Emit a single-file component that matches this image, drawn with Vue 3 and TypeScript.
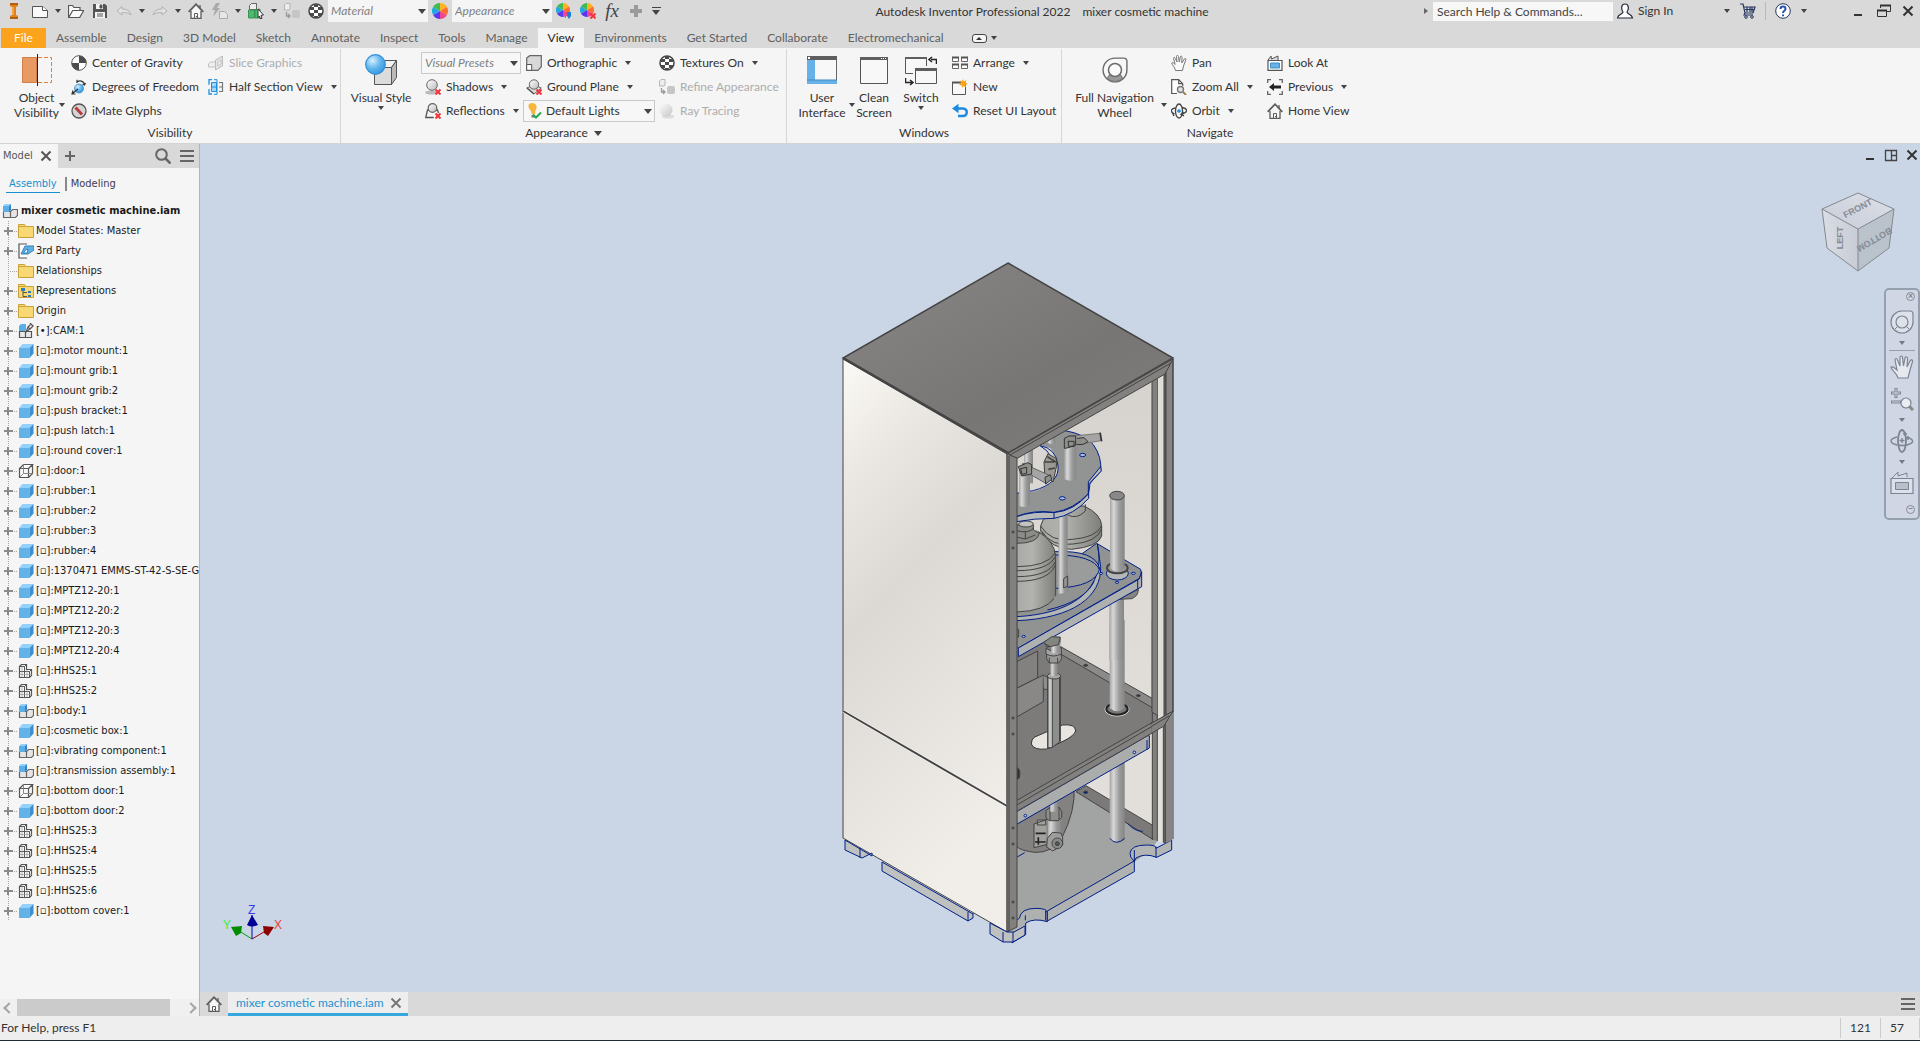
<script setup lang="ts">
import { ref } from 'vue'

interface Command {
  label: string
  icon: string
  arrow?: boolean
  disabled?: boolean
}

interface TreeNode {
  label: string
  icon: string
  leaf?: boolean
}

const tabs = [
  'Assemble', 'Design', '3D Model', 'Sketch', 'Annotate', 'Inspect', 'Tools', 'Manage', 'View',
  'Environments', 'Get Started', 'Collaborate', 'Electromechanical',
]
const activeTab = ref('View')

const visibilityA: Command[] = [
  { label: 'Center of Gravity', icon: 'gravity' },
  { label: 'Degrees of Freedom', icon: 'freedom' },
  { label: 'iMate Glyphs', icon: 'imate' },
]
const visibilityB: Command[] = [
  { label: 'Slice Graphics', icon: 'slice', disabled: true },
  { label: 'Half Section View', icon: 'section', arrow: true },
]
const shading: Command[] = [
  { label: 'Shadows', icon: 'shadow', arrow: true },
  { label: 'Reflections', icon: 'reflect', arrow: true },
]
const projection: Command[] = [
  { label: 'Orthographic', icon: 'ortho', arrow: true },
  { label: 'Ground Plane', icon: 'ground', arrow: true },
]
const textures: Command[] = [
  { label: 'Textures On', icon: 'texture', arrow: true },
  { label: 'Refine Appearance', icon: 'refine', disabled: true },
  { label: 'Ray Tracing', icon: 'ray', disabled: true },
]
const windowCommands: Command[] = [
  { label: 'Arrange', icon: 'arrange', arrow: true },
  { label: 'New', icon: 'newwin' },
  { label: 'Reset UI Layout', icon: 'reset' },
]
const navigateA: Command[] = [
  { label: 'Pan', icon: 'hand' },
  { label: 'Zoom All', icon: 'zoomall', arrow: true },
  { label: 'Orbit', icon: 'orbit', arrow: true },
]
const navigateB: Command[] = [
  { label: 'Look At', icon: 'lookat' },
  { label: 'Previous', icon: 'previous', arrow: true },
  { label: 'Home View', icon: 'home' },
]

const part = (name: string, icon = 'part'): TreeNode => ({ label: `[▫]:${name}`, icon })

const tree: TreeNode[] = [
  { label: 'Model States: Master', icon: 'folder' },
  { label: '3rd Party', icon: 'third' },
  { label: 'Relationships', icon: 'folder', leaf: true },
  { label: 'Representations', icon: 'folderrep' },
  { label: 'Origin', icon: 'folder' },
  { label: '[•]:CAM:1', icon: 'cam' },
  part('motor mount:1'),
  part('mount grib:1'),
  part('mount grib:2'),
  part('push bracket:1'),
  part('push latch:1'),
  part('round cover:1'),
  part('door:1', 'wire'),
  part('rubber:1'),
  part('rubber:2'),
  part('rubber:3'),
  part('rubber:4'),
  part('1370471 EMMS-ST-42-S-SE-G'),
  part('MPTZ12-20:1'),
  part('MPTZ12-20:2'),
  part('MPTZ12-20:3'),
  part('MPTZ12-20:4'),
  part('HHS25:1', 'wireasm'),
  part('HHS25:2', 'wireasm'),
  part('body:1', 'asm'),
  part('cosmetic box:1'),
  part('vibrating component:1', 'asm'),
  part('transmission assembly:1', 'asm'),
  part('bottom door:1', 'wire'),
  part('bottom door:2'),
  part('HHS25:3', 'wireasm'),
  part('HHS25:4', 'wireasm'),
  part('HHS25:5', 'wireasm'),
  part('HHS25:6', 'wireasm'),
  part('bottom cover:1'),
]
</script>

<template>
  <div class="app">
    <svg class="sprite" aria-hidden="true">
      <defs>
        <linearGradient id="ball" x1="0" y1="0" x2="1" y2="1">
          <stop offset="0" stop-color="#fff" /><stop offset="1" stop-color="#bbb" />
        </linearGradient>
        <radialGradient id="blueball" cx=".35" cy=".3" r=".7">
          <stop offset="0" stop-color="#d8efff" /><stop offset=".6" stop-color="#5fb4ec" /><stop offset="1" stop-color="#3c9be0" />
        </radialGradient>
      </defs>
      <symbol id="wheelcolors" viewBox="0 0 16 16">
        <path d="M8 8V0A8 8 0 0 1 14.9 4z" fill="#ffb41f" /><path d="M8 8l6.9-4A8 8 0 0 1 14.9 12z" fill="#ff6d2b" />
        <path d="M8 8l6.9 4A8 8 0 0 1 8 16z" fill="#f0468b" /><path d="M8 8v8A8 8 0 0 1 1.1 12z" fill="#5a36f5" />
        <path d="M8 8l-6.9 4A8 8 0 0 1 1.1 4z" fill="#22a7de" /><path d="M8 8L1.1 4A8 8 0 0 1 8 0z" fill="#3fba55" />
      </symbol>
      <symbol id="redx" viewBox="0 0 16 16"><path d="M10.500 10.500l5 5m0-5l-5 5" stroke="#f5333a" stroke-width="2" /></symbol>
      <symbol id="logo" viewBox="0 0 16 16">
        <path d="M4 0h8v3l-2 1v8l2 1v3H4v-3l2-1V4L4 3z" fill="#e0811b" /><path d="M4 0h8v2H4zM4 14h8v2H4z" fill="#b45f10" /><path d="M6 4h2v8H6z" fill="#f3a549" />
      </symbol>
      <symbol id="doc" viewBox="0 0 16 16"><path d="M.5 3.500h10l5 4v7H.5z" fill="#fafafa" stroke="#555" /><path d="M10.500 3.500v4h5" fill="#fff" stroke="#555" /></symbol>
      <symbol id="open" viewBox="0 0 16 16"><path d="M.5 14.500v-12h4l1.500 2h6v3M.7 14.500l4-7h11l-4 7z" fill="#fafafa" stroke="#555" stroke-width="1.200" /></symbol>
      <symbol id="save" viewBox="0 0 16 16"><path d="M1 1h12l2 2v12H1z" fill="#555" /><path d="M4 1h7v5H4zM3 9h10v6H3z" fill="#f4f4f4" /><path d="M8 2h2v3H8zM5 11h6M5 13h6" fill="#555" stroke="#555" /></symbol>
      <symbol id="undo" viewBox="0 0 16 16"><path d="M1 8l5-4.500V6c5 0 8 2 9 6-2-2-5-2.500-9-2.500V12z" fill="#e2e2e2" stroke="#b0b0b0" /></symbol>
      <symbol id="redo" viewBox="0 0 16 16"><path d="M15 8l-5-4.500V6c-5 0-8 2-9 6 2-2 5-2.500 9-2.500V12z" fill="#e2e2e2" stroke="#b0b0b0" /></symbol>
      <symbol id="home" viewBox="0 0 16 16"><path d="M3 8v7.500h10V8M12 2v3" fill="#f6f6f6" stroke="#5c5c5c" stroke-width="1.300" /><path d="M3.500 8L8 3l4.500 5z" fill="#f6f6f6" /><path d="M.7 8.800L8 1.200l7.300 7.600" fill="none" stroke="#5c5c5c" stroke-width="1.700" /><path d="M6.500 15.500v-5h3v5M8.500 13v1" fill="none" stroke="#5c5c5c" /></symbol>
      <symbol id="update" viewBox="0 0 16 16"><path d="M4 0L0 7h3L1 14l7-9H5l3-5z" fill="#aaa" /><path d="M7.500 8.500h5l3 3v4h-8z" fill="#e6e6e6" stroke="#aaa" /></symbol>
      <symbol id="selectprio" viewBox="0 0 16 16"><path d="M1.500 2.500l2-2h5v6h-7zM8.500.5v6" fill="#eee" stroke="#666" /><path d="M.5 7h6v8h-6zM7 7l5-1v9H7z" fill="#49bd6b" stroke="#3e8f56" /><path d="M10 6l5.500 6-2.500.3 1 3-1.500.7-1-3-1.500 1.500z" fill="#fff" stroke="#333" /></symbol>
      <symbol id="refine" viewBox="0 0 16 16"><path d="M.5 2l1.500-1.500h4V6L5 7H.5z" fill="#eee" stroke="#b5b5b5" /><rect x="8" y="7" width="8" height="8" rx="2" fill="#c6c6c6" /><path d="M2.500 9v4h3M4 11l2 2-2 2" fill="none" stroke="#999" stroke-width="1.300" /></symbol>
      <symbol id="texture" viewBox="0 0 16 16"><circle cx="8" cy="8" r="7" fill="#fff" stroke="#444" stroke-width="1.500" /><path d="M6 1h4v3H6zM2 4h4v3H2zM10 4h4v3h-4zM6 7h4v3H6zM2 10h4v3H2zM10 10h4v3h-4zM6 13h4v2H6z" fill="#4a4a4a" /></symbol>
      <symbol id="adjust" viewBox="0 0 16 16"><use href="#wheelcolors" width="14" height="14" /><path d="M11 9h4v4l-2 3-2-3z" fill="#177fd6" /><path d="M9 14h1m6 0h1" stroke="#444" /></symbol>
      <symbol id="clearcol" viewBox="0 0 16 16"><use href="#wheelcolors" width="14" height="14" /><use href="#redx" width="16" height="16" /></symbol>
      <symbol id="plusgray" viewBox="0 0 16 16"><path d="M8 2v12M2 8h12" stroke="#9a9a9a" stroke-width="4" /></symbol>
      <symbol id="user" viewBox="0 0 16 16"><path d="M8 1c4 0 4 5 2 8 0 2 5 2 5.500 6H.5C1 11 6 11 6 9 4 6 4 1 8 1z" fill="#fff" stroke="#23283c" stroke-width="1.200" /></symbol>
      <symbol id="cart" viewBox="0 0 16 16"><path d="M0 1h3l2 9h8l2-6H4m1 2.500h9M7 4v5m3-5v5m2-5v5M5 10l-1 2h9" fill="none" stroke="#26355f" stroke-width="1.200" /><circle cx="6" cy="14" r="1.300" fill="none" stroke="#26355f" /><circle cx="12" cy="14" r="1.300" fill="none" stroke="#26355f" /></symbol>
      <symbol id="help" viewBox="0 0 16 16"><circle cx="8" cy="8" r="7.300" fill="#fff" stroke="#243763" /><path d="M5.500 6c0-3.300 5-3.300 5 0 0 1.800-2.500 1.800-2.500 4M8 11.500v1.800" fill="none" stroke="#2450b4" stroke-width="2" /></symbol>
      <symbol id="restore" viewBox="0 0 16 16"><path d="M5.500 5V2.500h10v6H12" fill="none" stroke="#333" /><path d="M5 2.500h11" stroke="#333" stroke-width="2" /><path d="M2.500 7.500h9v6h-9z" fill="none" stroke="#333" /><path d="M2 7.500h10" stroke="#333" stroke-width="2" /></symbol>
      <symbol id="tilewin" viewBox="0 0 16 16"><path d="M2.500 3.500h11v10h-11zM8.500 3.500v10M8.500 8.500h5M2 3.500h12" fill="none" stroke="#444" stroke-width="1.300" /></symbol>
      <symbol id="close" viewBox="0 0 16 16"><path d="M3.500 3.500l9 9m0-9l-9 9" stroke="currentColor" stroke-width="2" /></symbol>
      <symbol id="minimize" viewBox="0 0 16 16"><path d="M4 12h8" stroke="#333" stroke-width="2" /></symbol>

      <symbol id="objvis" viewBox="0 0 32 32"><path d="M1.500 3.500h14v25h-14z" fill="#e89a62" stroke="#cf7f49" /><path d="M17 3.500h13.500v25H17" fill="none" stroke="#dd7f3d" stroke-dasharray="4 2" /><path d="M16.500 0v32" stroke="#222" /></symbol>
      <symbol id="gravity" viewBox="0 0 16 16"><circle cx="8" cy="8" r="7.300" fill="#fff" stroke="#555" /><path d="M8 8V.7A7.300 7.300 0 0 1 15.300 8zM8 8v7.300A7.300 7.300 0 0 1 .7 8z" fill="#4d4d4d" /></symbol>
      <symbol id="freedom" viewBox="0 0 16 16"><circle cx="8" cy="9.500" r="4.500" fill="url(#blueball)" stroke="#3785bd" stroke-width=".7" /><path d="M1 15l6-5M2 11.500L1 15h3.500M6 3c3-2 6-1 7.500 2M6 .8V4m8.500 0l-1 2-2-.7" fill="none" stroke="#333" stroke-width="1.200" /></symbol>
      <symbol id="imate" viewBox="0 0 16 16"><circle cx="8" cy="8" r="7" fill="#d5d5d5" stroke="#555" stroke-width="1.300" /><path d="M4.500 4.500l6.500 7" stroke="#b93b3b" stroke-width="3" /></symbol>
      <symbol id="slice" viewBox="0 0 16 16"><path d="M.5 9l2-2h7v5h-9z" fill="#eee" stroke="#c2c2c2" /><path d="M7.500 5l7-4v10l-7 4z" fill="#e3e3e3" stroke="#bdbdbd" /><path d="M10 7l3-2v4l-3 2z" fill="#f7f7f7" stroke="#c2c2c2" /></symbol>
      <symbol id="section" viewBox="0 0 16 16"><path d="M4 .7H1v5M1 10v5h3" fill="none" stroke="#1a8fe3" stroke-width="1.300" /><path d="M3.500 3.500h5v9h-5zM3.500 8h5" fill="#a8d6f7" stroke="#1a8fe3" /><path d="M6 .7h3v14.600H6" fill="none" stroke="#1a8fe3" /><path d="M11 3.500h3.500v9H11M11 8h3.500" fill="none" stroke="#777" stroke-width="1.200" /></symbol>
      <symbol id="vstyle" viewBox="0 0 32 32"><path d="M9.500 13.500h17v17h-17z" fill="#dcdcdc" stroke="#555" /><path d="M9.500 13.500l5-7h17l-5 7z" fill="#f2f2f2" stroke="#555" /><path d="M26.500 13.500l5-7v17l-5 7z" fill="#b9b9b9" stroke="#555" /><circle cx="10.500" cy="10.500" r="9.800" fill="url(#blueball)" stroke="#3390d8" stroke-width="1.200" /></symbol>
      <symbol id="shadow" viewBox="0 0 16 16"><ellipse cx="6.500" cy="13.500" rx="6.500" ry="2" fill="#bbb" /><circle cx="7" cy="6" r="5.300" fill="url(#ball)" stroke="#666" /><use href="#redx" width="16" height="16" /></symbol>
      <symbol id="reflect" viewBox="0 0 16 16"><path d="M4 7H2.500L.7 14.500h8M11 7h1.500l1 3" fill="none" stroke="#555" stroke-width="1.300" /><circle cx="7.500" cy="5" r="4.300" fill="url(#ball)" stroke="#666" stroke-width="1.200" /><use href="#redx" width="16" height="16" /></symbol>
      <symbol id="ortho" viewBox="0 0 16 16"><path d="M.7 3l3-2.300h11.600v11L12 15.300H.7z" fill="#d8d8d8" stroke="#666" stroke-width="1.200" /><path d="M.7 9.500h5v5.800h-5z" fill="#fff" stroke="#555" /></symbol>
      <symbol id="ground" viewBox="0 0 16 16"><path d="M.7 9L8 6l7.300 3L8 15z" fill="#ddd" stroke="#666" /><circle cx="8" cy="5.500" r="4.700" fill="url(#ball)" stroke="#666" /><path d="M1 9l7 6" stroke="#555" stroke-width="1.500" /><use href="#redx" width="16" height="16" /></symbol>
      <symbol id="bulb" viewBox="0 0 16 16"><path d="M5 0c6 0 5 6 3.500 7.500L8 11H4.500L4 8C0 4 1 0 5 0z" fill="#f6b73c" /><path d="M4.500 12H8v2.500H4.500z" fill="#777" /><path d="M6 11.500l3 3 5-5" fill="none" stroke="#24ab4b" stroke-width="2" /></symbol>
      <symbol id="ray" viewBox="0 0 16 16"><ellipse cx="9" cy="13.500" rx="6.500" ry="2" fill="#ddd" /><circle cx="7" cy="7" r="6.500" fill="url(#ball)" opacity=".8" /></symbol>
      <symbol id="userif" viewBox="0 0 32 32"><path d="M1.500 2.500h29v27h-29z" fill="#f8f8f8" stroke="#666" /><path d="M1 2h30v4H1z" fill="#5e5e5e" /><path d="M2 3h2v2H2z" fill="#fff" /><path d="M1 6h8v20H1zM1 26h30v4H1z" fill="#67b1e6" /><path d="M1 26h30" stroke="#4189c1" /></symbol>
      <symbol id="clean" viewBox="0 0 32 32"><path d="M2.500 3.500h27v26h-27z" fill="#f8f8f8" stroke="#555" /><path d="M2 3h28v3H2z" fill="#5e5e5e" /><path d="M23 4.500h6" stroke="#fff" stroke-dasharray="1 1" /></symbol>
      <symbol id="switch" viewBox="0 0 32 32"><path d="M.5 3.500h21v16H.5z" fill="#f8f8f8" stroke="#555" /><path d="M0 3h22v2H0z" fill="#5e5e5e" /><path d="M9.500 13.500h23v17h-23z" fill="#f8f8f8" stroke="#f5f5f5" stroke-width="3" /><path d="M10.500 14.500h21v15h-21z" fill="#f8f8f8" stroke="#555" /><path d="M10 14h22v3H10z" fill="#5e5e5e" /><path d="M26 5.500h5.500V10M27 3l-3 2.500L27 8M.5 24v4.500H7M5 26l3 2.500L5 31" fill="none" stroke="#222" stroke-width="1.500" /></symbol>
      <symbol id="arrange" viewBox="0 0 16 16"><path d="M.5 2.500h6v4h-6zM9.500 2.500h6v4h-6zM.5 9.500h6v4h-6zM9.500 9.500h6v4h-6z" fill="#fff" stroke="#666" /><path d="M0 2.500h7m2 0h7M0 9.500h7m2 0h7" stroke="#555" stroke-width="2" /></symbol>
      <symbol id="newwin" viewBox="0 0 16 16"><path d="M.5 3.500h13v12H.5z" fill="#f8f8f8" stroke="#555" /><path d="M0 3.500h12" stroke="#555" stroke-width="2" /><path d="M11 0l1 2.500L14.500 1l-.8 2.700L16 5l-2.500 1 .5 2.500L11.500 7 10 9l-.5-2.700L7 6l2-1.700L8 1.500l2 .8z" fill="#f9a51a" /></symbol>
      <symbol id="reset" viewBox="0 0 16 16"><path d="M3 5.500h8c5 0 5 7.500 0 7.500H6" fill="none" stroke="#1b8ae0" stroke-width="2.500" /><path d="M0 5.500L6.500.8v9.400z" fill="#1b8ae0" /></symbol>
      <symbol id="navwheel" viewBox="0 0 24 24"><path d="M12 1h8q3 0 3 3v8A11 11 0 1 1 12 1z" fill="#f7f7f7" stroke="#6b6b6b" stroke-width="1.300" /><path d="M5 20c1-4 4-5 7-5s6 1 7 5c-4 3.500-10 3.500-14 0z" fill="#999" stroke="#777" /><circle cx="12" cy="12" r="6" fill="#fafafa" stroke="#6b6b6b" stroke-width="1.400" /></symbol>
      <symbol id="hand" viewBox="0 0 16 16"><path d="M4.500 15.500C4 12 1 10 .7 8c1-1 2 0 3.500 1.500L2.500 3.500c0-1.500 1.300-1.500 1.800 0L6 7 5.500 1.500c0-1.400 1.700-1.400 2 0L8.300 7l1-5c.4-1.400 1.800-1 1.700.3L10.800 8l2.500-4c.8-1.200 2-.4 1.500.8L12.500 11l-1 4.500z" fill="#fafafa" stroke="#777" /></symbol>
      <symbol id="zoomall" viewBox="0 0 16 16"><path d="M6 14.500H.7V.7h7l4 4V7M7.700.7v4h4" fill="#fff" stroke="#555" stroke-width="1.200" /><circle cx="9.500" cy="10.500" r="3" fill="#e2e2e2" stroke="#777" stroke-width="1.400" /><path d="M12 13l3 3" stroke="#a0784f" stroke-width="1.800" /></symbol>
      <symbol id="orbit" viewBox="0 0 16 16"><ellipse cx="8" cy="8" rx="3.500" ry="7" fill="none" stroke="#444" stroke-width="1.300" /><path d="M4.500 5C-1 6-1 9 3.500 11M11 4.500c6 1 6 5 0 6.500m1.500-2L10 11.300l3 1.500M3 13l-2-4" fill="none" stroke="#444" stroke-width="1.300" /><path d="M8 6v4M6 8h4" stroke="#1b8ae0" stroke-width="1.300" /></symbol>
      <symbol id="lookat" viewBox="0 0 16 16"><path d="M1 5l3-4 .5 3L11 1v4" fill="#ddd" stroke="#555" /><path d="M1 5.500h14v9.800H1z" fill="#fff" stroke="#555" stroke-width="1.200" /><path d="M3.500 8h9v5h-9z" fill="#67b1e6" stroke="#3f8fc9" /></symbol>
      <symbol id="previous" viewBox="0 0 16 16"><path d="M4 .7H.7V4M12 .7h3.300V4M4 15.300H.7V12M12 15.300h3.300V12" fill="none" stroke="#666" stroke-width="1.300" /><path d="M2 8l5-4v2.500h7v3H7V12z" fill="#222" /></symbol>

      <symbol id="folder" viewBox="0 0 16 16"><path d="M.5 14.500v-13h6l1.500 2h7.500v11z" fill="#f8d873" stroke="#c9a038" /><path d="M.5 3.500h7" stroke="#c9a038" /></symbol>
      <symbol id="folderrep" viewBox="0 0 16 16"><use href="#folder" width="16" height="16" /><path d="M3 5h4v3H3zM10 8h3v2h-3zM10 12h3v2h-3z" fill="#2b7fc0" /><path d="M5 8v5.500h4M5 9.500h4" fill="none" stroke="#555" /></symbol>
      <symbol id="third" viewBox="0 0 16 16"><path d="M9 1H1v14h8" fill="#fff" stroke="#555" stroke-width="1.200" /><path d="M3 11l4-8h9v4l-6 4z" fill="#5fb0e6" stroke="#3780b5" /><path d="M5.500 10L8 6.500h2L9 10z" fill="#fff" stroke="#3780b5" /></symbol>
      <symbol id="part" viewBox="0 0 16 16"><path d="M1 5h10.500v10H1z" fill="#62b2e8" /><path d="M1 5l3.500-4h11l-4 4z" fill="#93d0fa" /><path d="M11.500 5l4-4v9.500l-4 4.500z" fill="#3d8fcf" /></symbol>
      <symbol id="wire" viewBox="0 0 16 16"><path d="M1.500 5.500h9v9h-9zM1.500 5.500l4-4h9l-4 4M14.500 1.500v9l-4 4" fill="#fafafa" stroke="#555" stroke-width="1.200" /><path d="M5.500 1.500v9h9M5.500 10.500l-4 4" fill="none" stroke="#888" /></symbol>
      <symbol id="wireasm" viewBox="0 0 16 16"><path d="M1.500 3.500l2-2h5v5h5v6l-2 2h-10z" fill="#fafafa" stroke="#555" stroke-width="1.200" /><path d="M1.500 8.500h10v6M6.500 3.500v11M1.500 3.500h5l2-2M11.500 8.500l2-2" fill="none" stroke="#555" /><path d="M4 2v12M1.500 11.500h12M9 7v7" stroke="#999" stroke-width=".7" /></symbol>
      <symbol id="asm" viewBox="0 0 16 16"><path d="M1.500 8.500h7v6h-7zM8.500 8.500l2-2h5v6l-2 2h-5z" fill="#e5e5e5" stroke="#666" stroke-width="1.200" /><path d="M1 3h6v6H1z" fill="#5aafe8" /><path d="M1 3l2-2h6L7 3z" fill="#93d0fa" /><path d="M7 3l2-2v5.500L7 9z" fill="#3585c4" /></symbol>
      <symbol id="cam" viewBox="0 0 16 16"><path d="M1.500 8.500h6v6h-6zM7.500 8.500h6v6h-6z" fill="#e8e8e8" stroke="#555" stroke-width="1.200" /><path d="M1 3l2-2h5v6L7 8H1z" fill="#5aafe8" /><path d="M8 9l2-5 2 2zM10 4l3-3m-1 5l3-3M12 0l3.500 3.500" fill="#fff" stroke="#555" stroke-width="1.200" /></symbol>
      <symbol id="search" viewBox="0 0 16 16"><circle cx="6.500" cy="6.500" r="5.300" fill="none" stroke="#666" stroke-width="2" /><path d="M10.500 10.500l5 5" stroke="#666" stroke-width="2.500" /></symbol>
      <symbol id="menu" viewBox="0 0 16 16"><path d="M1 3h14M1 8h14M1 13h14" stroke="#666" stroke-width="2" /></symbol>
      <symbol id="plus" viewBox="0 0 16 16"><path d="M8 3v10M3 8h10" stroke="#666" stroke-width="2" /></symbol>

      <symbol id="nwheel" viewBox="0 0 24 24"><path d="M12 1h8q3 0 3 3v8A11 11 0 1 1 12 1z" fill="#dce1ea" stroke="#7d8594" stroke-width="1.200" /><circle cx="12" cy="12" r="6" fill="#dce1ea" stroke="#7d8594" stroke-width="1.200" /><path d="M7 17l-2 2m12-2l2 2" stroke="#7d8594" /></symbol>
      <symbol id="nhand" viewBox="0 0 24 24"><path d="M8 23C7 18 1 15 1 12c2-1 4 1 6 3L5 5c0-2 2-2 2.500 0L10 11V2.500c0-2 2.500-2 2.500 0L13.500 11 15 3c.5-2 3-1 2.500 1L17 12l3-6c1-2 3-1 2.500.5L20 15l-2 8z" fill="#e6e9ee" stroke="#7d8594" stroke-width="1.200" /></symbol>
      <symbol id="nzoom" viewBox="0 0 24 24"><path d="M6 1v10M1 6h10M1 15h10" stroke="#7d8594" stroke-width="3" /><path d="M6 2v8M2 6h8M2 15h8" stroke="#cfd5e0" /><path d="M19 19l4 4" stroke="#888" stroke-width="3" /><circle cx="16" cy="16" r="5" fill="#e9ecf1" stroke="#7d8594" stroke-width="1.200" /></symbol>
      <symbol id="norbit" viewBox="0 0 24 24"><ellipse cx="12" cy="12" rx="4" ry="11" fill="none" stroke="#7d8594" stroke-width="1.800" /><path d="M7 8c-8 2-8 6 0 8m10-8c8 3 7 6 0 8-4 .8-7 .5-9 0M12 9v5m-2.500-2.500h5M15 3l0 4m-2-2h4m1 2v4m-2-2h4" fill="none" stroke="#7d8594" stroke-width="1.400" /></symbol>
      <symbol id="nlook" viewBox="0 0 24 24"><path d="M2 7l6-6v4l9-3v4" fill="#d5dae4" stroke="#7d8594" /><path d="M1 7.500h22v15H1z" fill="#dce1ea" stroke="#7d8594" stroke-width="1.200" /><path d="M5.500 11.500h13v7h-13z" fill="#b9c0cc" stroke="#7d8594" /></symbol>
    </svg>

    <header class="titlebar">
      <div class="quick">
        <button class="logo" aria-label="Inventor"><svg class="ic"><use href="#logo" /></svg></button>
        <button class="tool" aria-label="New"><svg class="ic"><use href="#doc" /></svg></button>
        <button class="drop" aria-label="New options"></button>
        <button class="tool" aria-label="Open"><svg class="ic"><use href="#open" /></svg></button>
        <button class="tool" aria-label="Save"><svg class="ic"><use href="#save" /></svg></button>
        <button class="tool" aria-label="Undo"><svg class="ic"><use href="#undo" /></svg></button>
        <button class="drop" aria-label="Undo list"></button>
        <button class="tool" aria-label="Redo"><svg class="ic"><use href="#redo" /></svg></button>
        <button class="drop" aria-label="Redo list"></button>
        <button class="tool" aria-label="Home"><svg class="ic"><use href="#home" /></svg></button>
        <button class="tool" aria-label="Update"><svg class="ic"><use href="#update" /></svg></button>
        <button class="drop" aria-label="Update options"></button>
        <button class="tool" aria-label="Select"><svg class="ic"><use href="#selectprio" /></svg></button>
        <button class="drop" aria-label="Selection options"></button>
        <button class="tool" aria-label="Refine"><svg class="ic"><use href="#refine" /></svg></button>
        <button class="tool" aria-label="Textures"><svg class="ic"><use href="#texture" /></svg></button>
        <span class="combo flat"><select aria-label="Material"><option>Material</option></select></span>
        <button class="tool" aria-label="Appearance browser"><svg class="ic"><use href="#wheelcolors" /></svg></button>
        <span class="combo flat"><select aria-label="Appearance"><option>Appearance</option></select></span>
        <button class="tool" aria-label="Adjust"><svg class="ic"><use href="#adjust" /></svg></button>
        <button class="tool" aria-label="Clear"><svg class="ic"><use href="#clearcol" /></svg></button>
        <button class="tool fx" aria-label="Parameters">fx</button>
        <button class="tool" aria-label="Add"><svg class="ic"><use href="#plusgray" /></svg></button>
        <button class="customize" aria-label="Customize"></button>
      </div>
      <div class="title"><span>Autodesk Inventor Professional 2022</span><span>mixer cosmetic machine</span></div>
      <div class="account">
        <button class="drop side" aria-label="Collapse search"></button>
        <input class="help-search" type="text" aria-label="Search" placeholder="Search Help &amp; Commands..." />
        <button class="signin"><svg class="ic"><use href="#user" /></svg>Sign In</button>
        <button class="drop" aria-label="Account options"></button>
        <button class="tool" aria-label="App store"><svg class="ic"><use href="#cart" /></svg></button>
        <span class="bar"></span>
        <button class="tool" aria-label="Help"><svg class="ic"><use href="#help" /></svg></button>
        <button class="drop" aria-label="Help options"></button>
      </div>
      <div class="winbtns">
        <button class="tool" aria-label="Minimize"><svg class="ic"><use href="#minimize" /></svg></button>
        <button class="tool" aria-label="Restore"><svg class="ic"><use href="#restore" /></svg></button>
        <button class="tool" aria-label="Close"><svg class="ic"><use href="#close" /></svg></button>
      </div>
    </header>

    <nav class="tabs">
      <button class="file">File</button>
      <button v-for="t in tabs" :key="t" class="tab" :class="{ active: t === activeTab }" @click="activeTab = t">{{ t }}</button>
      <button class="pill" aria-label="Minimize ribbon"><span class="pill-box"></span><span class="caret"></span></button>
    </nav>

    <section class="ribbon">
      <div class="panel p-vis">
        <div class="cmds">
          <button class="big w-obj"><svg class="ic32"><use href="#objvis" /></svg><span>Object<br />Visibility</span><i class="caret right"></i></button>
          <div class="col w-dof">
            <button v-for="c in visibilityA" :key="c.label" class="cmd"><svg class="ic"><use :href="'#' + c.icon" /></svg>{{ c.label }}</button>
          </div>
          <div class="col">
            <button v-for="c in visibilityB" :key="c.label" class="cmd" :disabled="c.disabled"><svg class="ic"><use :href="'#' + c.icon" /></svg>{{ c.label }}<i v-if="c.arrow" class="caret"></i></button>
          </div>
        </div>
        <h2>Visibility</h2>
      </div>

      <div class="panel p-app">
        <div class="cmds">
          <button class="big w-style"><svg class="ic32"><use href="#vstyle" /></svg><span>Visual Style</span><i class="caret"></i></button>
          <div class="col w-shade">
            <span class="combo presets"><select aria-label="Visual Presets"><option>Visual Presets</option></select></span>
            <button v-for="c in shading" :key="c.label" class="cmd inset"><svg class="ic"><use :href="'#' + c.icon" /></svg>{{ c.label }}<i class="caret"></i></button>
          </div>
          <div class="col w-proj">
            <button v-for="c in projection" :key="c.label" class="cmd inset"><svg class="ic"><use :href="'#' + c.icon" /></svg>{{ c.label }}<i class="caret"></i></button>
            <span class="combo lights"><svg class="ic"><use href="#bulb" /></svg><select aria-label="Lighting style"><option>Default Lights</option></select></span>
          </div>
          <div class="col">
            <button v-for="c in textures" :key="c.label" class="cmd" :disabled="c.disabled"><svg class="ic"><use :href="'#' + c.icon" /></svg>{{ c.label }}<i v-if="c.arrow" class="caret"></i></button>
          </div>
        </div>
        <h2>Appearance <i class="caret wide"></i></h2>
      </div>

      <div class="panel p-win">
        <div class="cmds">
          <button class="big w-ui"><svg class="ic32"><use href="#userif" /></svg><span>User<br />Interface</span><i class="caret right"></i></button>
          <button class="big w-clean"><svg class="ic32"><use href="#clean" /></svg><span>Clean<br />Screen</span></button>
          <button class="big w-switch"><svg class="ic32"><use href="#switch" /></svg><span>Switch</span><i class="caret"></i></button>
          <div class="col">
            <button v-for="c in windowCommands" :key="c.label" class="cmd"><svg class="ic"><use :href="'#' + c.icon" /></svg>{{ c.label }}<i v-if="c.arrow" class="caret"></i></button>
          </div>
        </div>
        <h2>Windows</h2>
      </div>

      <div class="panel p-nav">
        <div class="cmds">
          <button class="big w-wheel"><svg class="ic32 padded"><use href="#navwheel" /></svg><span>Full Navigation<br />Wheel</span><i class="caret right"></i></button>
          <div class="col w-zoom">
            <button v-for="c in navigateA" :key="c.label" class="cmd"><svg class="ic"><use :href="'#' + c.icon" /></svg>{{ c.label }}<i v-if="c.arrow" class="caret"></i></button>
          </div>
          <div class="col">
            <button v-for="c in navigateB" :key="c.label" class="cmd"><svg class="ic"><use :href="'#' + c.icon" /></svg>{{ c.label }}<i v-if="c.arrow" class="caret"></i></button>
          </div>
        </div>
        <h2>Navigate</h2>
      </div>
    </section>

    <main class="work">
      <aside class="browser">
        <div class="browser-tabs">
          <button class="model-tab">Model <svg class="ic"><use href="#close" /></svg></button>
          <button class="tool" aria-label="Add tab"><svg class="ic"><use href="#plus" /></svg></button>
          <span class="grow"></span>
          <button class="tool" aria-label="Find"><svg class="ic"><use href="#search" /></svg></button>
          <button class="tool" aria-label="Browser menu"><svg class="ic"><use href="#menu" /></svg></button>
        </div>
        <div class="modes"><button class="mode on">Assembly</button><button class="mode">Modeling</button></div>
        <div class="root"><svg class="ic"><use href="#asm" /></svg>mixer cosmetic machine.iam</div>
        <ul class="tree">
          <li v-for="n in tree" :key="n.label">
            <span class="twig" :class="{ leaf: n.leaf }"></span>
            <svg class="ic"><use :href="'#' + n.icon" /></svg>
            <span class="name">{{ n.label }}</span>
          </li>
        </ul>
        <div class="hscroll"><button class="chev" aria-label="Scroll left"></button><span class="thumb"></span><button class="chev next" aria-label="Scroll right"></button></div>
      </aside>

      <section class="stage">
        <div class="viewport">
          <svg class="scene" viewBox="200 144 1720 848" preserveAspectRatio="xMidYMid meet" role="img" aria-label="mixer cosmetic machine">
            <defs>
              <linearGradient id="roof" x1="0" y1="0" x2="1" y2="1"><stop offset="0" stop-color="#888785" /><stop offset=".6" stop-color="#777674" /><stop offset="1" stop-color="#7f7e7c" /></linearGradient>
              <linearGradient id="side" x1="0" y1="0" x2=".3" y2="1"><stop offset="0" stop-color="#fcfaf6" /><stop offset=".2" stop-color="#ebe8e3" /><stop offset=".45" stop-color="#dcd9d5" /><stop offset="1" stop-color="#f1eee9" /></linearGradient>
              <linearGradient id="wall" x1="0" y1="0" x2="0" y2="1"><stop offset="0" stop-color="#d6d3cf" /><stop offset="1" stop-color="#e6e3df" /></linearGradient>
              <linearGradient id="tube"><stop offset="0" stop-color="#a4a4a4" /><stop offset=".25" stop-color="#d8d8d8" /><stop offset=".65" stop-color="#9a9a9a" /><stop offset="1" stop-color="#868686" /></linearGradient>
              <linearGradient id="bottle"><stop offset="0" stop-color="#a9a9a5" /><stop offset=".4" stop-color="#b2b2ae" /><stop offset="1" stop-color="#7e7e7a" /></linearGradient>
            </defs>
            <path d="M1017 457l149-85v466l-26-10-123-40z" fill="url(#wall)" />

            <svg x="990" y="620" width="200" height="330" viewBox="0 0 600 990" overflow="hidden">
              <g stroke="#444" stroke-width="3">
                <path d="M80 90l65-30 67 20 280 167 50 40L55 558z" fill="#7c7b79" stroke="none" />
                <path d="M212 80l278 157v28L212 102z" fill="#8b8a88" /><ellipse cx="287" cy="136" rx="6" ry="3" fill="#333" /><ellipse cx="445" cy="227" rx="6" ry="3" fill="#333" />
                <path d="M80 125l63-32v80l-63 32z" fill="#82817f" /><path d="M80 205l80-40v80l-80 46z" fill="#898886" /><path d="M160 165l14 8v35h-12" fill="#8f8e8c" />
                <path d="M132 352l85-37q40-4 40 18-5 14-32 28l-55 26q-40 4-46-15 0-12 8-20z" fill="#e8e5e1" stroke="#333" />
                <path d="M173 170v215l14-3 24-18V170z" fill="#8e8e8c" /><path d="M174 170h13v213h-13z" fill="#c8cbcb" /><path d="M209 170v195" stroke-width="4" />
                <ellipse cx="192" cy="168" rx="20" ry="9" fill="#aaa" /><path d="M181 120h22v48h-22z" fill="url(#tube)" stroke="none" />
                <path d="M170 95q22 14 44 0v22l-8 12h-28l-8-12z" fill="#999" /><path d="M168 85q24 16 46-3v20q-24 12-46 0zM178 113v16m25-16v16" fill="#a2a2a2" /><path d="M184 50h25v36h-25z" fill="url(#tube)" stroke="none" /><path d="M165 65l20-15 25 3v15l-40 14z" fill="#777" />
                <ellipse cx="381" cy="268" rx="36" ry="20" fill="#777" stroke="#eee" /><ellipse cx="381" cy="267" rx="32" ry="17" fill="#777" stroke="#222" stroke-width="6" />
                <path d="M359 0h45v265q-22 18-45 0z" fill="url(#tube)" stroke="none" />
                <path d="M80 442q14 6 8 32l-8 5z" fill="#333" />

                <path d="M80 610l180-110 230 130 12 32-20 30-49 33-261 150-92 38z" fill="#a2a3a3" stroke="none" />
                <path d="M300 480l190-110v260z" fill="#e2dfdb" stroke="none" />
                <path d="M258 515l30-18 202 120v42z" fill="#7b7a78" /><ellipse cx="287" cy="517" rx="6" ry="4" fill="#00258f" />
                <path d="M413 610q20 24 45 24" fill="none" stroke="#001f87" />
                <path d="M80 600l172-100q6 70-37 155-32 45-80 42-40-4-55-17z" fill="#838280" /><path d="M132 612l40-14v75l-40 10zM142 600h25v15h-25z" fill="#a2a19e" /><path d="M137 640h30m-22 12v22m-10-8h32" stroke="#222" stroke-width="5" />
                <path d="M80 712l24-14" stroke="#001f87" />
                <path d="M172 585h42v52q-6 28-42 25z" fill="url(#tube)" stroke="none" /><path d="M172 655l15-18 25 2 6 12v24l-30 18-18-12z" fill="#9d9d9b" /><circle cx="202" cy="670" r="16" fill="#8a8a88" /><circle cx="202" cy="671" r="6" fill="#555" />
                <path d="M168 572l12-10h27l8 12v18l-10 10h-27l-10-8zM180 562v38m27-38v38" fill="#8e8e8c" /><path d="M180 535h24v40h-24z" fill="url(#tube)" stroke="none" />
                <path d="M359 410h45v250q-22 16-45 0z" fill="url(#tube)" stroke="none" /><path d="M359 655q20 24 45 0" fill="none" stroke="#001f87" />
                <path d="M80 575l393-228h5v37L80 613z" fill="#abadad" stroke="#001f87" /><path d="M471 360v30" stroke="#001f87" /><circle cx="106" cy="587" r="4" fill="#cde" stroke="#001f87" /><circle cx="433" cy="397" r="4" fill="#cde" stroke="#001f87" />
                <path d="M55 556L548 272l-25 46L82 573z" fill="#82817f" /><path d="M68 562L540 288" fill="none" />

                <path d="M88 895q4-30 50-30 35 0 34 14v26q-40-12-65 4v35l-40 24-12-8v-40z" fill="#afb1b1" stroke="#001f87" />
                <path d="M172 873l261-150v32L172 903z" fill="#b0b1b1" stroke="#001f87" />
                <path d="M420 700q2-25 50-25 30 0 28 10l47-25v30l-45 22q-35-14-62 2l-5 10q-14-12-13-24z" fill="#b3b5b5" stroke="#001f87" /><path d="M433 690v35M498 680v34M167 872v30M106 886v15" stroke="#001f87" />
                <path d="M487-10h15V664l-15-7z" fill="#82817f" stroke="none" /><path d="M502-10h18V668l-18-5z" fill="#e4e1dc" stroke="none" /><path d="M520-10h5V670l-5-2z" fill="#696866" stroke="none" /><path d="M525 318l22-40v382l-22 10z" fill="#868583" stroke="none" /><path d="M487-10V660M502-10V663M520-10V668M526 310V670" fill="none" />
              </g>
            </svg>

            <svg x="990" y="400" width="200" height="260" viewBox="0 0 600 780" overflow="hidden">
              <g stroke="#444" stroke-width="3">
                <path d="M358 595h44v190h-44z" fill="url(#tube)" stroke="none" />
                <path d="M385 598l60-30q0 20-20 28z" fill="#858583" />
                <path d="M80 600L320 430l132 78q6 12-4 27L85 744h-5z" fill="#919292" stroke="#001f87" />
                <path d="M85 744L448 537l7-22v45L85 770z" fill="#afb1b1" stroke="#001f87" />
                <path d="M443 540v26" stroke="#001f87" />
                <path d="M322 432C350 560 260 640 80 650v12C250 655 335 590 332 500z" fill="#b4b6b6" stroke="#001f87" />
                <path d="M195 455q120-5 134 50-10 55-134 60-40 0-60-10z" fill="#9a9b9b" stroke="#001f87" />
                <path d="M195 465q115 0 134 45M312 545q-30 60-140 85" fill="none" stroke="#001f87" />
                <ellipse cx="382" cy="520" rx="33" ry="20" fill="#b5b7b7" stroke="#001f87" />
                <ellipse cx="382" cy="504" rx="31" ry="16" fill="#999" stroke-width="6" />
                <path d="M360 287v217q22 22 44 0V287z" fill="url(#tube)" stroke="none" />
                <ellipse cx="381" cy="287" rx="22" ry="13" fill="#888" />
                <g fill="#c8d4ee" stroke="#001f87"><ellipse cx="430" cy="520" rx="6" ry="3" /><ellipse cx="381" cy="547" rx="5" ry="3" /><ellipse cx="101" cy="709" rx="5" ry="3" /><ellipse cx="333" cy="520" rx="5" ry="3" /></g>
                <path d="M152 378q8-40 70-60h60q52 24 53 60v30q-10 32-90 40-60 0-93-55z" fill="url(#bottle)" />
                <path d="M152 378q30 50 95 40 70-5 88-40M154 392q30 50 95 40 70-5 86-45M232 345q30 14 54-12v-20" fill="none" />
                <path d="M205 580V340h28v235q-12 8-28 5z" fill="url(#tube)" stroke="none" />
                <path d="M221 536l12-8v30l-12 6z" fill="none" />
                <path d="M80 420l60-30q52 30 57 80v118q-30 45-117 48z" fill="url(#bottle)" stroke="none" />
                <path d="M145 395q50 30 52 75v118M80 500q90 0 115-40M80 512q95 0 116-42M80 530q95 0 116-45M80 544q95 0 116-48M80 636q85-3 112-40" fill="none" />
                <path d="M80 375h50v15l18 10q-5 30-68 30z" fill="#8b8b87" /><path d="M80 392q35 10 52-8M82 412l24 5 30-12M106 395v22" fill="none" />
                <ellipse cx="108" cy="372" rx="22" ry="9" fill="#c2c2bf" />
                <path d="M225 92q60 10 85 42 26 36 22 80l-35 40-2 36q-45 50-103 48-60-8-112 12V280q80 0 115-45 20-50-14-90l-35-12z" fill="#929494" stroke="none" />
                <path d="M225 92q60 10 85 42 26 36 22 80l-35 40-2 27q-45 48-103 56-60-8-112 12" fill="none" stroke="#001f87" />
                <path d="M80 350q50-18 112-12 60-5 104-57v14q-44 50-104 60-60 0-112 10z" fill="#b9bbbb" stroke="#001f87" />
                <path d="M192 338v17" stroke="#001f87" />
                <path d="M332 200l-37 45v38l3-15 2-20 34-35z" fill="#b9bbbb" stroke="#001f87" />
                <path d="M80 280l50-8q80-22 74-76-5-50-55-60l-15 8-54 20z" fill="#dad7d3" stroke="none" />
                <path d="M80 280l50-8q80-22 74-76-5-50-55-60M150 137l20 15 32 45" fill="none" stroke="#001f87" />
                <path d="M102 155l27-15v110h-27z" fill="url(#tube)" stroke="none" />
                <path d="M172 128v-8l24-10v18q-12 8-24 0z" fill="url(#tube)" stroke="none" />
                <path d="M162 186l12-25 25 15v25l-10 45-25-25z" fill="#9b9993" stroke="#3e3e3a" /><path d="M163 186h30M175 208l20-4M172 170l25 16" stroke-width="5" stroke="#45443c" />
                <path d="M87 205h33v112q-16 8-33 0z" fill="url(#tube)" stroke="none" />
                <path d="M98 190l78 35q8 12-7 26l-70-40z" fill="#a5a5a5" stroke="#666" /><path d="M85 200l28-12 12 6v28l-30 6zM92 206l18-4v18l-14 3zM165 232l16-8 4 14-18 14z" fill="#8e8e8a" stroke="#333" />
                <path d="M223 140h36v98q-16 8-36 0z" fill="url(#tube)" stroke="none" />
                <path d="M250 108l82-8v22l-70 12z" fill="#a5a5a5" stroke="#777" /><path d="M330 98l5 26" stroke="#333" stroke-width="5" /><path d="M223 145v-30l14-7h20v28l-26 8zM234 124h18v15h-16zM260 115l22-2 12 12-14 8-20 1" fill="#8e8e8a" stroke="#333" />
                <ellipse cx="278" cy="165" rx="9" ry="5" fill="#a9bbe2" stroke="#001f87" /><ellipse cx="217" cy="295" rx="9" ry="5" fill="#a9bbe2" stroke="#001f87" />
                <path d="M183 710h28v50h-28z" fill="url(#tube)" stroke="none" /><path d="M160 728l25-18 26 2-6 22-25 6zM80 685l6 4v22h-6z" fill="#85857f" />
              </g>
            </svg>

            <g stroke="#444" stroke-width="1">
              <path d="M1152 380l6-4v340l-6-4z" fill="#82817f" /><path d="M1158 376l6-3v343h-6z" fill="#e0ddd8" stroke="none" /><path d="M1164 373h2v343h-2z" fill="#696866" />
              <path d="M1166 365l7-6v353l-7 6z" fill="#868583" /><path d="M1173 359v480" />
              <path d="M1152 723l21-12-9 15-12 7z" fill="#82817f" stroke="none" /><path d="M1150 724l23-13-9 15-12 7M1152 726l17-10" fill="none" />
              <path d="M1008 453l165-94-8 15-149 85z" fill="#82817f" /><path d="M1010 455l161-92" />
              <path d="M1008 263l165 95-165 95-165-95z" fill="url(#roof)" stroke-width="1.500" />
              <path d="M843 359l164 95v478l-164-94z" fill="url(#side)" /><path d="M843 358l165 95" stroke-width="2.500" />
              <path d="M843 711l164 95" stroke="#fff" stroke-width="3" /><path d="M843 711l164 95" stroke-width="2" />
              <path d="M1007 454l10 4v469l-10 5z" fill="#82817f" /><path d="M1009 456v475" />
              <g fill="#999" stroke="#333"><circle cx="1013" cy="532" r="1" /><circle cx="1013" cy="548" r="1" /><circle cx="1013" cy="718" r="1" /><circle cx="1013" cy="734" r="1" /><circle cx="1013" cy="828" r="1" /><circle cx="1013" cy="844" r="1" /><circle cx="1013" cy="902" r="1" /><circle cx="1013" cy="918" r="1" /></g>
            </g>
            <g fill="#bfc1c1" stroke="#001f87">
              <path d="M845 840v10l17 8 10-5V856M845 840l27 16M860 848v10" />
              <path d="M882 862v9l86 50 5-3v-5M882 862l91 52M968 912v9" />
              <path d="M990 923l17 9h7l11-6v9l-12 7h-10l-13-8z" /><path d="M1003 932v10M1013 932v10" />
            </g>

            <g class="axes">
              <path d="M252 939l-16-10" stroke="#00a000" /><path d="M252 939l17-10" stroke="#a00000" /><path d="M252 939v-24" stroke="#0000b0" />
              <path d="M231 927l11-1-1 7-5 3z" fill="#008c00" /><path d="M263 926l11 1-6 9-4-3z" fill="#8c0000" /><path d="M252 915l6 10q-6 3-11 0z" fill="#000094" />
              <text x="223" y="929" fill="#38f038">Y</text><text x="274" y="929" fill="#f03838">X</text><text x="248" y="914" fill="#3838f0">Z</text>
            </g>
          </svg>

          <div class="docbtns">
            <button class="tool" aria-label="Minimize view"><svg class="ic"><use href="#minimize" /></svg></button>
            <button class="tool" aria-label="Tile view"><svg class="ic"><use href="#tilewin" /></svg></button>
            <button class="tool" aria-label="Close view"><svg class="ic"><use href="#close" /></svg></button>
          </div>

          <svg class="cube" viewBox="0 0 76 84" role="img" aria-label="View cube">
            <defs>
              <linearGradient id="cubetop" x1="0" y1="1" x2="1" y2="0"><stop offset="0" stop-color="#c6ccd8" /><stop offset="1" stop-color="#dde0e7" /></linearGradient>
              <linearGradient id="cubeleft"><stop offset="0" stop-color="#dadde4" /><stop offset="1" stop-color="#c7ccd6" /></linearGradient>
            </defs>
            <path d="M38 3l36 16-36 20L2 19z" fill="url(#cubetop)" /><path d="M2 19l36 20v42L7 58z" fill="url(#cubeleft)" /><path d="M74 19L38 39v42l31-23z" fill="#bac2cb" />
            <path d="M38 3l36 16-5 39-31 23L7 58 2 19zM2 19l36 20 36-20M38 39v42" fill="none" stroke="#85888e" />
            <text transform="translate(38 19) rotate(-27)">FRONT</text>
            <text transform="translate(21 48) rotate(-90)">LEFT</text>
            <text transform="translate(54 49) rotate(150)">BOTTOM</text>
          </svg>

          <div class="navbar">
            <span class="dot">×</span>
            <button aria-label="Navigation wheel"><svg class="ic24"><use href="#nwheel" /></svg></button>
            <i class="caret"></i>
            <hr />
            <button aria-label="Pan view"><svg class="ic24"><use href="#nhand" /></svg></button>
            <button aria-label="Zoom"><svg class="ic24"><use href="#nzoom" /></svg></button>
            <i class="caret"></i>
            <button aria-label="Orbit view"><svg class="ic24"><use href="#norbit" /></svg></button>
            <i class="caret"></i>
            <button aria-label="Look at face"><svg class="ic24"><use href="#nlook" /></svg></button>
            <span class="dot end">−</span>
          </div>
        </div>

        <div class="doctabs">
          <button class="tool home" aria-label="Home tab"><svg class="ic"><use href="#home" /></svg></button>
          <button class="doctab">mixer cosmetic machine.iam<svg class="ic"><use href="#close" /></svg></button>
          <span class="grow"></span>
          <button class="tool" aria-label="Tab menu"><svg class="ic"><use href="#menu" /></svg></button>
        </div>
      </section>
    </main>

    <footer class="status"><span class="grow">For Help, press F1</span><span class="cell">121</span><span class="cell">57</span></footer>
  </div>
</template>

<style>
body { background: #f5f5f5; }
</style>

<style scoped>
* { box-sizing: border-box; }
.app { display: flex; flex-direction: column; height: 100vh; overflow: hidden; font: 12px/16px Lato, "Open Sans", sans-serif; color: #333; }
button { border: 0; padding: 0; margin: 0; background: none; font: inherit; color: inherit; white-space: nowrap; }
.sprite { position: absolute; width: 0; height: 0; }
.ic { width: 16px; height: 16px; flex: none; display: block; }
.ic24 { width: 24px; height: 24px; display: block; }
.ic32 { width: 32px; height: 32px; flex: none; display: block; }
.ic32.padded { padding: 3px; }
.grow { flex: 1; }
.caret, .drop::after { content: ""; display: block; flex: none; width: 0; height: 0; border: 3px solid transparent; border-top: 4px solid #444; border-bottom: 0; }
.tool { width: 24px; height: 18px; display: flex; align-items: center; justify-content: center; flex: none; }
.drop { width: 12px; height: 18px; display: flex; align-items: center; justify-content: center; flex: none; }

.titlebar { display: flex; height: 28px; background: #d9d9d9; align-items: flex-start; }
.quick, .account, .winbtns { display: flex; align-items: center; height: 22px; }
.logo { width: 28px; display: flex; justify-content: center; }
.fx { font: italic 19px/18px "Liberation Serif", serif; color: #444; }
.customize { width: 16px; height: 18px; display: flex; flex-direction: column; align-items: center; justify-content: center; gap: 2px; }
.customize::before { content: ""; width: 9px; height: 1px; background: #444; }
.customize::after { content: ""; border: 4px solid transparent; border-top: 5px solid #444; border-bottom: 0; }
.combo { position: relative; display: flex; align-items: center; }
.combo::after { content: ""; position: absolute; right: 2px; top: 50%; margin-top: -2px; border: 4px solid transparent; border-top: 5px solid #444; border-bottom: 0; pointer-events: none; }
.combo select { appearance: none; border: 0; background: none; font: inherit; color: inherit; width: 100%; height: 100%; padding: 0 0 0 3px; margin: 0; border-radius: 0; }
.flat { width: 100px; height: 22px; background: #f5f5f5; font-style: italic; color: #808080; }
.title { flex: 1; height: 24px; display: flex; align-items: center; justify-content: center; gap: 12px; }
.help-search { width: 180px; height: 19px; border: 0; padding: 0 4px; background: #f7f7f7; font: inherit; margin-left: 1px; }
.help-search::placeholder { color: #444; opacity: 1; }
.signin { display: flex; align-items: center; gap: 5px; width: 108px; padding-left: 4px; }
.side::after { border: 3px solid transparent; border-left: 4px solid #666; border-right: 0; }
.account .tool { width: 30px; }
.bar { width: 1px; height: 18px; background: #b9b9b9; margin: 0 2px; }
.winbtns { margin-left: 36px; gap: 1px; }

.tabs { display: flex; height: 20px; background: #d9d9d9; color: #606060; padding-left: 1px; }
.file { width: 45px; background: #fba31d; color: #fff; }
.tab { padding: 0 10px; }
.tab.active { background: #f5f5f5; color: #222; }
.pill { display: flex; align-items: center; gap: 4px; margin-left: 18px; }
.pill-box { width: 15px; height: 9px; border: 1px solid #444; border-radius: 3px; background: #f5f5f5; display: flex; align-items: center; justify-content: center; }
.pill-box::after { content: ""; border: 3px solid transparent; border-bottom: 3px solid #333; border-top: 0; }

.ribbon { display: flex; height: 96px; background: #f5f5f5; border-bottom: 1px solid #d4d4d4; }
.panel { display: flex; flex-direction: column; border-right: 1px solid #d6d6d6; margin-top: 1px; padding-top: 2px; }
.panel:last-child { border-right: 0; }
.p-vis { width: 341px; }
.p-app { width: 446px; }
.p-win { width: 275px; }
.p-nav { width: 296px; }
.cmds { display: flex; height: 72px; }
h2 { margin: 0; font: inherit; line-height: 20px; display: flex; justify-content: center; align-items: center; gap: 6px; }
.col { display: flex; flex-direction: column; flex: none; }
.cmd { height: 24px; display: flex; align-items: center; gap: 5px; text-align: left; }
.cmd .caret { margin-left: 3px; }
.cmd:disabled { color: #adadad; }
.inset { padding-left: 4px; }
.big { position: relative; display: flex; flex-direction: column; align-items: center; flex: none; padding-top: 3px; line-height: 15px; }
.big span { margin-top: 4px; }
.big .caret { margin-top: 1px; }
.big .caret.right { position: absolute; right: 0; top: 52px; margin: 0; }
.caret.wide { border-width: 5px 4px 0; }
.w-obj { width: 57px; margin-left: 8px; margin-right: 6px; }
.w-dof { width: 137px; }
.w-style { width: 80px; }
.w-shade { width: 101px; }
.w-proj { width: 137px; }
.w-ui { width: 66px; margin-left: 2px; }
.w-clean { width: 38px; }
.w-switch { width: 56px; margin-right: 3px; }
.w-wheel { width: 105px; margin-right: 4px; }
.w-zoom { width: 96px; }
.presets, .lights { height: 22px; margin: 1px 0; border: 1px solid #c9c9c9; background: #f7f7f7; }
.presets { width: 100px; font-style: italic; color: #808080; }
.lights { width: 132px; margin-left: 1px; padding-left: 3px; }

.work { flex: 1; display: flex; min-height: 0; }
.browser { width: 200px; flex: none; background: #f5f5f5; border-right: 1px solid #b4b4b4; display: flex; flex-direction: column; font: 11px/20px "DejaVu Sans Condensed", "Noto Sans", sans-serif; color: #1a1a1a; overflow: hidden; }
.browser-tabs { display: flex; align-items: center; height: 24px; background: #d9d9d9; flex: none; }
.model-tab { width: 58px; height: 24px; background: #f5f5f5; display: flex; align-items: center; gap: 5px; padding-left: 3px; color: #555; }
.modes { display: flex; padding: 7px 6px 0; height: 32px; flex: none; }
.mode { height: 18px; padding: 0 3px; color: #3f3a52; line-height: 18px; }
.mode.on { color: #1591d0; border-bottom: 1px solid #1591d0; margin-right: 5px; }
.mode:last-child { padding-left: 4px; border-left: 2px solid #888; height: 14px; line-height: 14px; margin-top: 2px; }
.root { display: flex; align-items: center; height: 21px; gap: 3px; padding-left: 2px; font-weight: bold; flex: none; }
.tree { list-style: none; margin: 0; padding: 0; flex: 1; min-height: 0; overflow: hidden; }
.tree li { display: flex; align-items: center; height: 20px; white-space: nowrap; }
.tree .ic { margin-right: 2px; }
.twig { width: 18px; height: 20px; flex: none; background: linear-gradient(#8a8a8a, #8a8a8a) 4px 9px / 9px 2px no-repeat, linear-gradient(#8a8a8a, #8a8a8a) 7px 6px / 2px 8px no-repeat, repeating-linear-gradient(90deg, #aaa 0 1px, transparent 1px 2px) 14px 10px / 4px 1px no-repeat, repeating-linear-gradient(#aaa 0 1px, transparent 1px 2px) 8px 0 / 1px 20px no-repeat; }
.twig.leaf { background: repeating-linear-gradient(90deg, #aaa 0 1px, transparent 1px 2px) 8px 10px / 10px 1px no-repeat, repeating-linear-gradient(#aaa 0 1px, transparent 1px 2px) 8px 0 / 1px 20px no-repeat; }
.hscroll { display: flex; height: 17px; align-items: center; background: #f0f0f0; flex: none; }
.thumb { width: 153px; height: 17px; background: #cbcbcb; margin-right: 12px; }
.chev { width: 17px; height: 17px; display: flex; align-items: center; justify-content: center; }
.chev::after { content: ""; width: 6px; height: 6px; border: 2px solid #a5a5a5; border-width: 0 0 2px 2px; transform: rotate(45deg); }
.chev.next::after { border-width: 2px 2px 0 0; }

.stage { flex: 1; display: flex; flex-direction: column; min-width: 0; }
.viewport { position: relative; flex: 1; min-height: 0; background: #cad6e6; overflow: hidden; }
.scene { width: 100%; height: 100%; display: block; }
.axes path { stroke-width: 1; }
.axes text { font: 12px "Liberation Sans", sans-serif; }
.docbtns { position: absolute; top: 2px; right: 0; display: flex; width: 58px; justify-content: space-between; }
.docbtns .tool { width: 16px; }
.cube { position: absolute; right: 24px; top: 46px; width: 76px; height: 84px; }
.cube text { font: bold 9px "Liberation Sans", sans-serif; fill: #868b95; text-anchor: middle; dominant-baseline: middle; }
.navbar { position: absolute; right: 0; top: 144px; width: 36px; display: flex; flex-direction: column; align-items: center; padding: 1px 0 3px; border: 2px solid #969fad; border-radius: 5px; background: #d0d6e3; }
.navbar button { padding: 0; margin: 4px 0; }
.navbar .caret { border-top-color: #737a88; margin: 3px 0; }
.navbar hr { width: 26px; margin: 2px 0 0; border: 0; border-top: 1px solid #969fad; }
.dot { align-self: flex-end; margin-right: 3px; width: 9px; height: 9px; border: 1px solid #868d99; border-radius: 50%; font-size: 9px; line-height: 6px; text-align: center; color: #666; margin-top: 1px; margin-bottom: 5px; }
.dot.end { margin: 6px 3px 1px 0; }
.doctabs { display: flex; align-items: center; height: 24px; background: #d9d9d9; flex: none; }
.doctabs .home { width: 28px; }
.doctab { height: 24px; padding: 0 4px 0 8px; gap: 4px; display: flex; align-items: center; background: #eee; color: #1c92cf; border-bottom: 3px solid #35a8de; }
.doctab .ic { color: #777; }
.status { display: flex; align-items: center; height: 25px; background: #eee; border-bottom: 1px solid #1f2d3b; padding-left: 1px; flex: none; }
.cell { width: 40px; height: 20px; line-height: 20px; border-left: 1px solid #ccc; padding-left: 9px; }
.cell:last-child { border-right: 1px solid #ccc; }
</style>
